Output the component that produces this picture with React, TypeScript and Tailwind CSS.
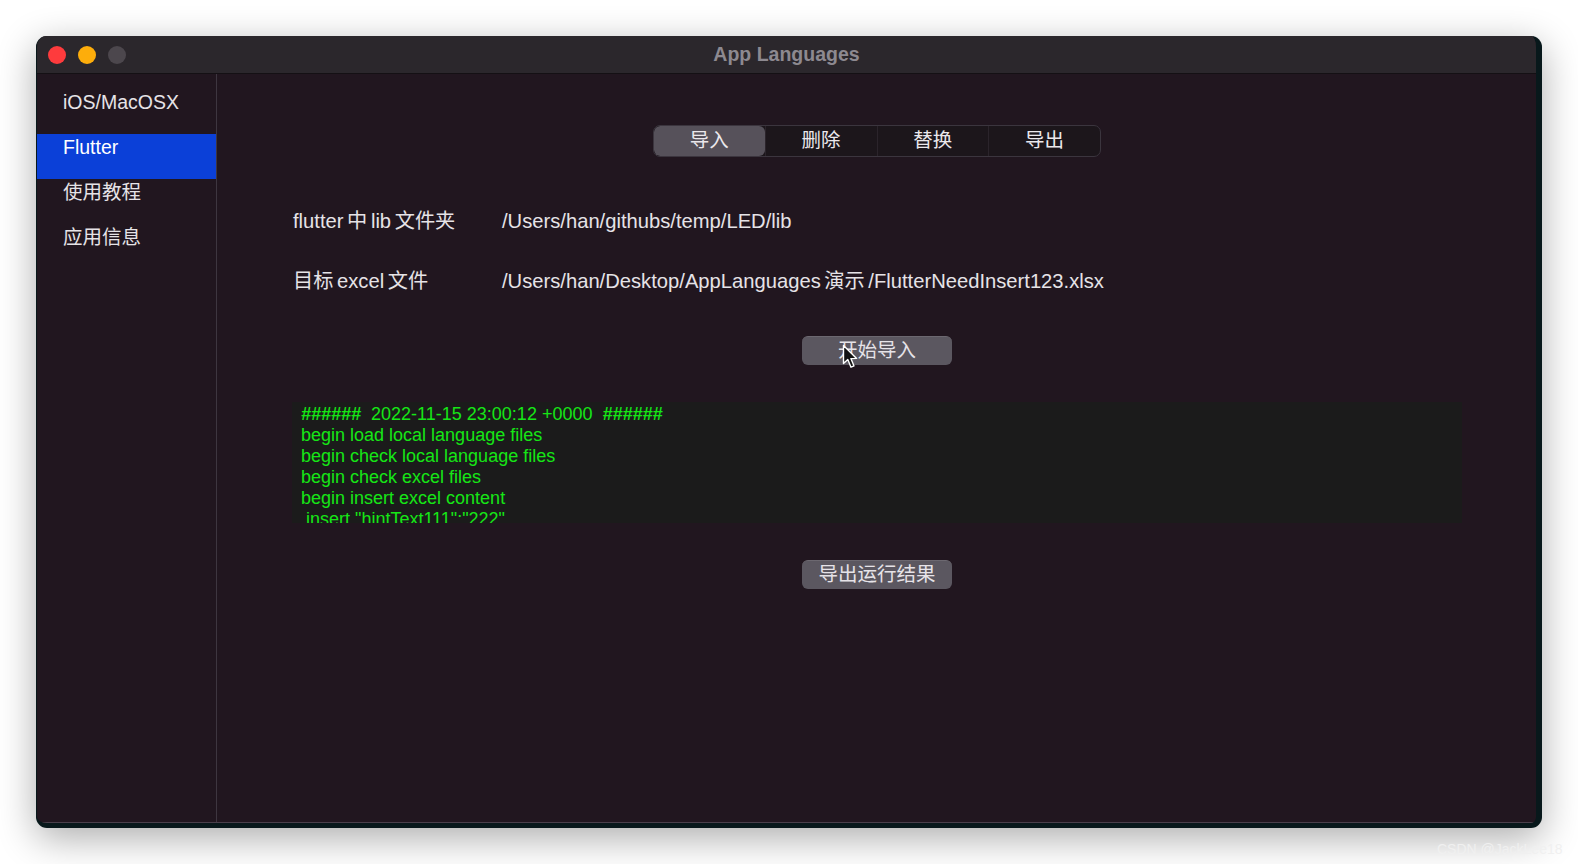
import React from 'react';

const font = { fontFamily: '"Liberation Sans", "Noto Sans CJK SC", Arial, sans-serif' };

const menu = ['iOS/MacOSX', 'Flutter', '使用教程', '应用信息'];
const tabs = ['导入', '删除', '替换', '导出'];

const logLines = [
  'begin load local language files',
  'begin check local language files',
  'begin check excel files',
  'begin insert excel content',
  ' insert "hintText111":"222"',
];

function Cursor() {
  return (
    <svg
      className="absolute left-[842px] top-[344px]"
      width="17"
      height="26"
      viewBox="0 0 17 26"
    >
      <path
        d="M1.5 1.5 L1.5 19.5 L5.8 15.6 L9 23.2 L12 21.9 L8.9 14.6 L14.6 14.4 Z"
        fill="#111"
        stroke="#fff"
        strokeWidth="1.4"
        strokeLinejoin="round"
      />
    </svg>
  );
}

function Button({ label }: { label: string }) {
  return (
    <div className="w-[150px] h-[29px] rounded-[6px] bg-[#5b5760] border-t border-[#6c6870] flex items-center justify-center text-[19.5px] text-[#e6e3e8]">
      {label}
    </div>
  );
}

export default function App() {
  return (
    <div className="relative w-[1578px] h-[864px] bg-white overflow-hidden" style={font}>
      <div className="pl-[36px] pt-[36px]">
        <div className="w-[1506px] h-[792px] rounded-[11px] border-l border-r-[6px] border-b-[5px] border-[#08181b] shadow-[0_10px_38px_rgba(0,0,0,0.33)] overflow-hidden flex flex-col bg-[#21161f]">
          {/* title bar */}
          <div className="relative h-[38px] shrink-0 bg-[#2b272c] border-b border-[#141014] flex items-center">
            <div className="flex items-center gap-[12px] pl-[11px]">
              <span className="w-[18px] h-[18px] rounded-full bg-[#fe3b3d]" />
              <span className="w-[18px] h-[18px] rounded-full bg-[#fdad0b]" />
              <span className="w-[18px] h-[18px] rounded-full bg-[#4c474d]" />
            </div>
            <div className="absolute inset-0 flex items-center justify-center text-[19.5px] font-bold text-[#8d8990]">
              App Languages
            </div>
          </div>

          <div className="flex flex-1 min-h-0 border-b border-[#4a3f4b]">
            {/* sidebar */}
            <div className="w-[180px] shrink-0 border-r border-[#3e3640] pt-[15px]">
              {menu.map((m) => (
                <div
                  key={m}
                  className={
                    m === 'Flutter'
                      ? 'h-[45px] pl-[26px] pt-[1px] bg-[#0b40d8] text-white text-[19.5px] leading-[24px]'
                      : 'h-[45px] pl-[26px] pt-[1px] text-[#e6e3e7] text-[19.5px] leading-[24px]'
                  }
                >
                  {m}
                </div>
              ))}
            </div>

            {/* main */}
            <div className="flex-1 flex flex-col pl-[75px] pr-[74px] pt-[51px]">
              <div className="self-center flex h-[32px] w-[448px] rounded-[7px] border border-[#3b353e] bg-[#1c161b] overflow-hidden">
                {tabs.map((t, i) => (
                  <div
                    key={t}
                    className={
                      i === 0
                        ? 'flex-1 flex items-center justify-center rounded-[6px] bg-[#56515a] text-[19.5px] text-[#ebe8ec]'
                        : 'flex-1 flex items-center justify-center border-l border-[#2b242b] text-[19.5px] text-[#ebe8ec]'
                    }
                  >
                    {t}
                  </div>
                ))}
              </div>

              <div className="mt-[52px] flex flex-col gap-[36px] pl-[1px] text-[20.2px] leading-[24px] text-[#e6e3e7] [word-spacing:-2px]">
                <div className="flex">
                  <div className="w-[209px]">flutter 中 lib 文件夹</div>
                  <div>/Users/han/githubs/temp/LED/lib</div>
                </div>
                <div className="flex">
                  <div className="w-[209px]">目标 excel 文件</div>
                  <div>/Users/han/Desktop/AppLanguages 演示 /FlutterNeedInsert123.xlsx</div>
                </div>
              </div>

              <div className="mt-[43px] self-center">
                <Button label="开始导入" />
              </div>

              <div className="mt-[37px] h-[121px] bg-[#1b1b1b] overflow-hidden pl-[9px] pt-[2px]">
                <div className="text-[18px] leading-[21px] text-[#16e616] whitespace-pre">
                  <div>
                    <span className="font-bold italic">######</span>
                    {'  2022-11-15 23:00:12 +0000  '}
                    <span className="font-bold italic">######</span>
                  </div>
                  {logLines.map((l, i) => (
                    <div key={i}>{l}</div>
                  ))}
                </div>
              </div>

              <div className="mt-[37px] self-center">
                <Button label="导出运行结果" />
              </div>
            </div>
          </div>
        </div>
      </div>

      <Cursor />

      <div className="absolute left-[1437px] top-[839px] text-[14px] text-[#f0f0f0]">CSDN @JackLee18</div>
    </div>
  );
}
